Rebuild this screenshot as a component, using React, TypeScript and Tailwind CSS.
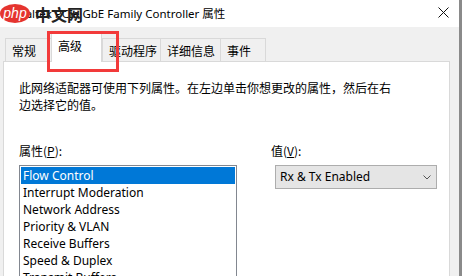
import React from 'react';

const font = { fontFamily: '"Noto Sans", "Noto Sans CJK SC", sans-serif' };

const props = [
    'Flow Control',
    'Interrupt Moderation',
    'Network Address',
    'Priority & VLAN',
    'Receive Buffers',
    'Speed & Duplex',
    'Transmit Buffers',
];

type Tab = { label: string; w: string; selected?: boolean };

const tabs: Tab[] = [
    { label: '常规', w: 'w-[46px]' },
    { label: '高级', w: 'w-[51px]', selected: true },
    { label: '驱动程序', w: 'w-[58px]' },
    { label: '详细信息', w: 'w-[60px]' },
    { label: '事件', w: 'w-[46px]' },
];

export default function App() {
    return (
        <div
            className="relative flex w-[463px] h-[276px] overflow-hidden bg-white text-black"
            style={{ fontFamily: '"Noto Sans CJK SC", "Noto Sans", sans-serif' }}
        >
            {/* window */}
            <div className="flex flex-col w-[459px] h-full">
                {/* title bar */}
                <div className="relative flex items-center h-[27px] bg-white pl-[12px] shrink-0">
                    <span className="text-[11.5px] leading-none whitespace-nowrap" style={font}>
                        Realtek PCIe GbE Family Controller 属性
                    </span>
                    <svg className="absolute left-[438px] top-[7px]" width="11" height="11" viewBox="0 0 11 11">
                        <path d="M0.5 0.5L10.5 10.5M10.5 0.5L0.5 10.5" stroke="#111" strokeWidth="1" />
                    </svg>
                </div>

                {/* body */}
                <div className="flex-1 bg-[#f0f0f0] pl-[3px] pr-[9px]">
                    {/* tab strip */}
                    <div className="flex items-end h-[34px] pl-[2px]">
                        {tabs.map((t) =>
                            t.selected ? (
                                <div
                                    key={t.label}
                                    className={`${t.w} h-[29px] -mb-px relative z-10 bg-white border border-b-0 border-[#d9d9d9] pl-[6px] pt-[3px] text-[12px] leading-[17px]`}
                                >
                                    {t.label}
                                </div>
                            ) : (
                                <div
                                    key={t.label}
                                    className={`${t.w} h-[23px] bg-[#f0f0f0] border-t border-l last:border-r border-[#d9d9d9] pl-[6px] pt-[3px] text-[12px] leading-[17px]`}
                                >
                                    {t.label}
                                </div>
                            ),
                        )}
                    </div>

                    {/* panel */}
                    <div className="h-[300px] bg-white border border-[#d9d9d9] pl-[15px] pt-[17px]">
                        <p className="text-[12px] leading-[17px] w-[380px]">
                            此网络适配器可使用下列属性。在左边单击你想更改的属性，然后在右边选择它的值。
                        </p>

                        <div className="flex mt-[29px]">
                            <div className="w-[218px]">
                                <div className="text-[12px] leading-[17px]">
                                    属性(<span className="underline">P</span>):
                                </div>
                                <div className="mt-[6px] border border-[#828790] p-px">
                                    {props.map((p, i) => (
                                        <div
                                            key={p}
                                            className={`h-[17px] pl-[2px] text-[12px] leading-[17px] whitespace-nowrap ${
                                                i === 0 ? 'bg-[#0078d7] text-white' : ''
                                            }`}
                                            style={font}
                                        >
                                            {p}
                                        </div>
                                    ))}
                                </div>
                            </div>

                            <div className="ml-[34px]">
                                <div className="text-[12px] leading-[17px]">
                                    值(<span className="underline">V</span>):
                                </div>
                                <div className="mt-[6px] ml-[4px] flex items-center justify-between w-[162px] h-[24px] bg-[#e5e5e5] border border-[#adadad] pl-[4px] pr-[5px]">
                                    <span className="text-[12px] leading-none" style={font}>
                                        Rx &amp; Tx Enabled
                                    </span>
                                    <svg width="8" height="5" viewBox="0 0 8 5">
                                        <path d="M0.5 0.5L4 4L7.5 0.5" fill="none" stroke="#555" strokeWidth="1" />
                                    </svg>
                                </div>
                            </div>
                        </div>
                    </div>
                </div>
            </div>

            {/* window frame edge */}
            <div className="w-[3px] h-full bg-[#8a8a8a]" />
            <div className="w-[1px] h-full bg-white" />

            {/* red highlight */}
            <div className="absolute left-[47px] top-[31px] w-[72px] h-[41px] border-[3px] border-[#f23a3a] z-20" />

            {/* watermark */}
            <div className="absolute left-0 top-[4px] flex items-center z-20">
                <div className="flex items-center justify-center w-[30px] h-[19px] rounded-[50%] bg-[#e5342f]">
                    <span className="text-white text-[14px] italic leading-none -mt-[2px]" style={{ fontFamily: '"Liberation Sans", sans-serif' }}>
                        php
                    </span>
                </div>
                <span className="ml-[5px] text-[16px] font-semibold leading-none text-[#222]">中文网</span>
            </div>
        </div>
    );
}
